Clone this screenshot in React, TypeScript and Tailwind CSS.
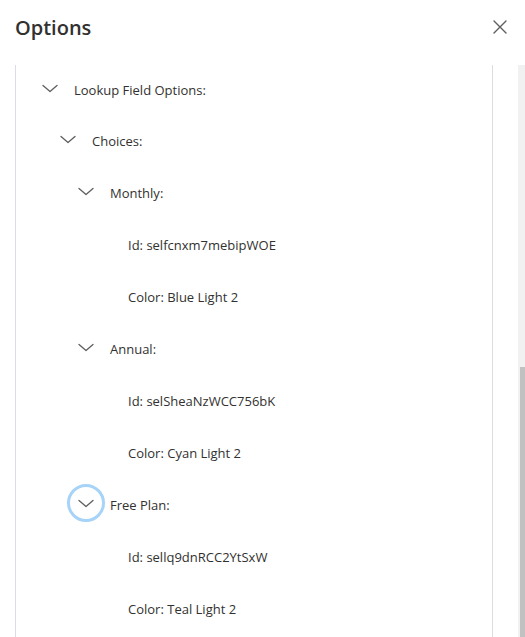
import React from "react";

const Chevron = () => (
  <svg width="16" height="16" viewBox="0 0 16 16" fill="none">
    <path d="M1 5.5 L8 11.5 L15 5.5" stroke="#605e5c" strokeWidth="1.3" strokeLinecap="round" strokeLinejoin="round" />
  </svg>
);

type Row = { kind: "node" | "leaf"; level: number; text: string; focus?: boolean };

const rows: Row[] = [
  { kind: "node", level: 0, text: "Lookup Field Options:" },
  { kind: "node", level: 1, text: "Choices:" },
  { kind: "node", level: 2, text: "Monthly:" },
  { kind: "leaf", level: 3, text: "Id: selfcnxm7mebipWOE" },
  { kind: "leaf", level: 3, text: "Color: Blue Light 2" },
  { kind: "node", level: 2, text: "Annual:" },
  { kind: "leaf", level: 3, text: "Id: selSheaNzWCC756bK" },
  { kind: "leaf", level: 3, text: "Color: Cyan Light 2" },
  { kind: "node", level: 2, text: "Free Plan:", focus: true },
  { kind: "leaf", level: 3, text: "Id: sellq9dnRCC2YtSxW" },
  { kind: "leaf", level: 3, text: "Color: Teal Light 2" },
];

const indent = ["pl-[15px]", "pl-[33px]", "pl-[51px]", "pl-[69px]"];

export default function App() {
  return (
    <div
      className="w-[525px] h-[637px] bg-white overflow-hidden flex flex-col"
      style={{ fontFamily: '"Open Sans", "Noto Sans", sans-serif' }}
    >
      <div className="h-[65px] flex items-start justify-between pl-[15px] pr-[13px] pt-[13px]">
        <h1 className="text-[20px] font-semibold text-[#323130] leading-[30px]">Options</h1>
        <button className="w-[24px] h-[24px] mt-[2px] flex items-center justify-center">
          <svg width="14" height="14" viewBox="0 0 14 14" fill="none">
            <path d="M1 1 L13 13 M13 1 L1 13" stroke="#605e5c" strokeWidth="1.4" strokeLinecap="round" />
          </svg>
        </button>
      </div>
      <div className="flex-1 flex min-h-0">
        <div className="ml-[15px] w-[478px] border-l border-r border-[#dcdce2] flex flex-col pt-[1px]">
          {rows.map((r, i) => (
            <div
              key={i}
              className={`flex items-center ${i === 0 ? "h-[50px]" : "h-[52px]"} ${indent[r.level]} shrink-0`}
            >
              {r.kind === "node" ? (
                <div
                  className={`w-[38px] h-[38px] mb-[6px] rounded-full flex items-center justify-center shrink-0 ${
                    r.focus ? "border-[3px] border-[#a6d3f7]" : ""
                  }`}
                >
                  <Chevron />
                </div>
              ) : (
                <div className="w-[38px] h-[38px] shrink-0" />
              )}
              <span className="ml-[5px] text-[13px] text-[#323130] whitespace-nowrap">{r.text}</span>
            </div>
          ))}
        </div>
        <div className="ml-auto w-[7px] bg-[#f1f1f1] flex flex-col">
          <div className="mt-[302px] flex-1 ml-[2px] bg-[#c1c1c1]" />
        </div>
      </div>
    </div>
  );
}
